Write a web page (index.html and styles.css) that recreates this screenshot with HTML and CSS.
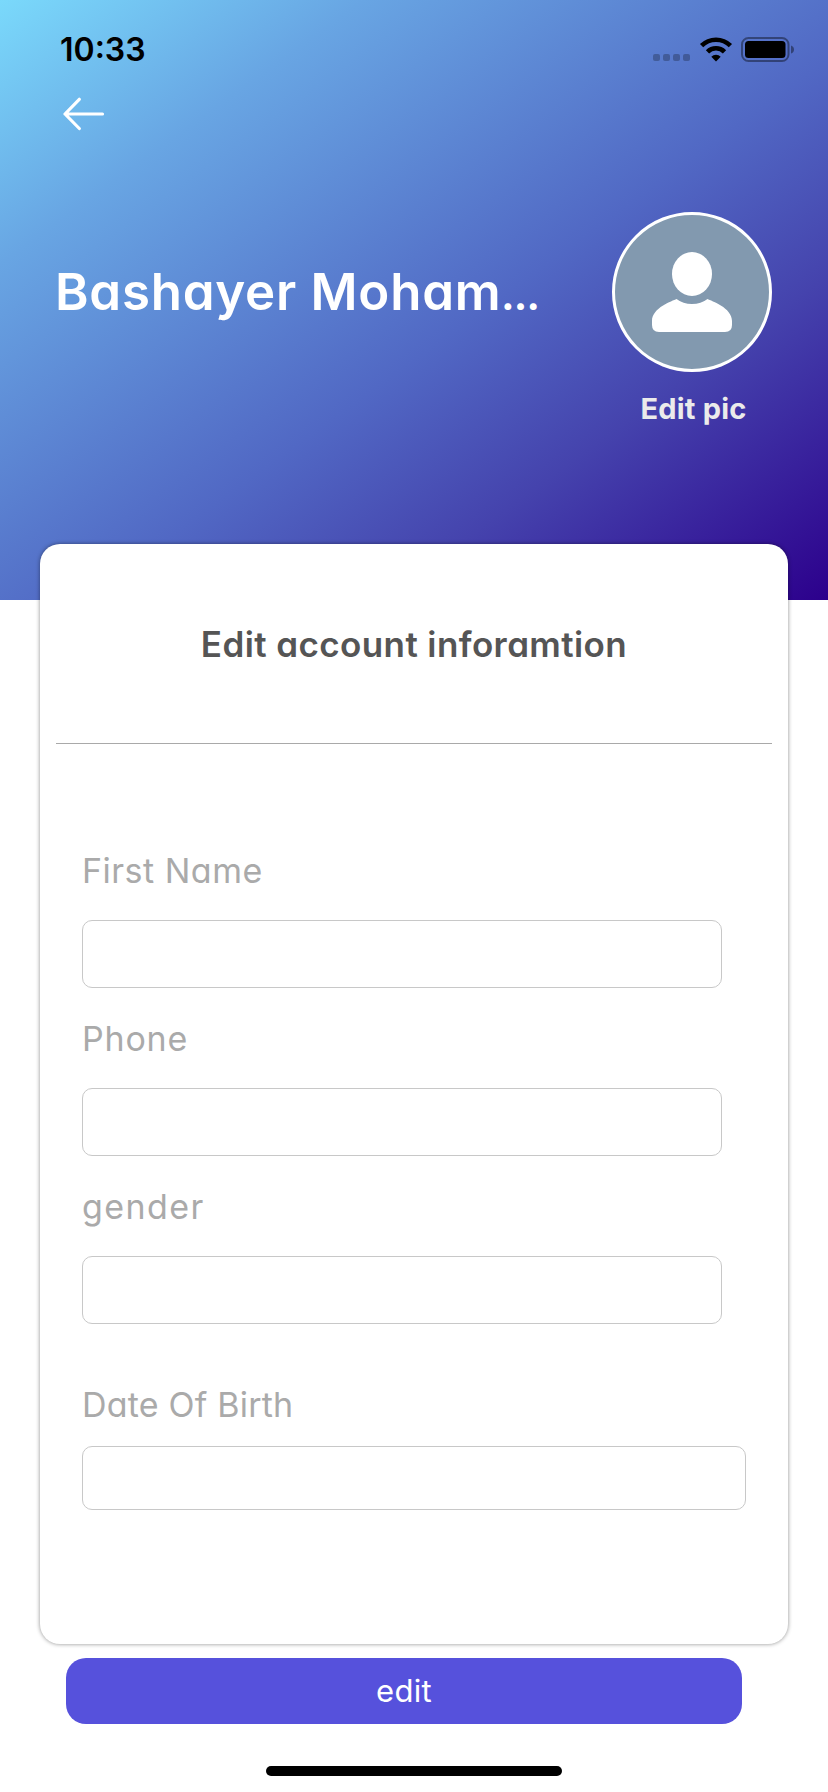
FILE: index.html
```html
<!DOCTYPE html>
<html lang="en">
<head>
<meta charset="utf-8">
<title>Edit account</title>
<link rel="stylesheet" href="styles.css">
</head>
<body>
<main class="screen">
  <header class="hero">
    <div class="status">
      <span class="clock">10:33</span>
      <div class="indicators">
        <svg class="signal" width="38" height="8" viewBox="0 0 38 8"><g fill="#000" fill-opacity=".25"><rect width="7" height="7" rx="2"/><rect x="10" width="7" height="7" rx="2"/><rect x="20" width="7" height="7" rx="2"/><rect x="30" width="7" height="7" rx="2"/></g></svg>
        <svg class="wifi" width="34" height="26" viewBox="0 0 34 26"><g fill="none" stroke="#000" stroke-width="4.6"><path d="M2.600 8.700a20.300 20.300 0 0 1 28.800 0"/><path d="M8.500 14.800a12 12 0 0 1 17 0"/></g><path d="M17 24.500l-4.700-4.800a6.800 6.800 0 0 1 9.400 0z"/></svg>
        <svg class="battery" width="54" height="26" viewBox="0 0 54 26"><rect x="1" y="1" width="46.500" height="23" rx="6.500" fill="none" stroke="#000" stroke-opacity=".4" stroke-width="2"/><rect x="4" y="4" width="40.500" height="17" rx="3.500"/><path d="M50 8.500q3 1 3 4t-3 4z" fill-opacity=".4"/></svg>
      </div>
    </div>
    <a class="back" href="#" aria-label="Back"><svg width="42" height="34" viewBox="0 0 42 34"><path d="M16.300 2.300L2 17l14.300 14.500M2 17h37.500" fill="none" stroke="#fff" stroke-width="3.200" stroke-linecap="round" stroke-linejoin="round"/></svg></a>
    <div class="profile">
      <h1 class="name">Bashayer Moham<span class="dots">…</span></h1>
      <div class="photo">
        <svg class="avatar" width="160" height="160" viewBox="0 0 160 160"><circle cx="80" cy="80" r="78.500" fill="#8299af" stroke="#fff" stroke-width="3"/><ellipse cx="80" cy="62" rx="20" ry="22" fill="#fff"/><path d="M64.500 87Q71 92 80 92t15.500-5c4 2 24.500 8.500 24.500 22v4q0 7-7 7H47q-7 0-7-7v-4c0-13.500 20.500-20 24.500-22z" fill="#fff"/></svg>
        <a class="edit-pic" href="#">Edit pic</a>
      </div>
    </div>
  </header>
  <section class="card">
    <h2 class="title">Edit account inforamtion</h2>
    <form class="form">
      <label class="field"><span class="label first">First Name</span><input class="input" type="text"></label>
      <label class="field"><span class="label phone">Phone</span><input class="input" type="text"></label>
      <label class="field"><span class="label gender">gender</span><input class="input" type="text"></label>
      <label class="field birth"><span class="label date">Date Of Birth</span><input class="input" type="text"></label>
    </form>
  </section>
  <button class="submit" type="button">edit</button>
  <div class="home"></div>
</main>
</body>
</html>
```

FILE: styles.css
```css
* { box-sizing: border-box; }
body { margin: 0; background: #fff; }
.screen {
  width: 828px;
  height: 1792px;
  overflow: hidden;
  display: flex;
  flex-direction: column;
  font-family: Inter, "Open Sans", sans-serif;
  font-feature-settings: "cv11";
}
.hero {
  height: 600px;
  flex: none;
  background: linear-gradient(to bottom right, #7ad9fb 0%, #68a5e3 22%, #5168c4 55%, #4543ad 73%, #2c008c 100%);
}
.status {
  height: 97px;
  padding: 31px 33px 0 60px;
  display: flex;
  justify-content: space-between;
}
.clock {
  font-size: 32px;
  line-height: 38px;
  font-weight: 600;
}
.indicators { display: flex; align-items: flex-start; padding-top: 6px; }
.signal { margin: 17px 8px 0 0; }
.wifi { margin-right: 8px; }
.back { display: block; width: 42px; height: 34px; margin-left: 63px; }
.back svg { display: block; }
.profile {
  display: flex;
  justify-content: space-between;
  padding: 81px 56px 0 55px;
}
.name {
  margin: 50px 0 0;
  font-size: 51px;
  line-height: 60px;
  font-weight: 600;
  letter-spacing: .75px;
  color: #fff;
  white-space: nowrap;
}
.dots { font-size: 34px; font-weight: 900; letter-spacing: 0; }
.photo { display: flex; flex-direction: column; align-items: center; width: 160px; }
.avatar { display: block; }
.edit-pic {
  margin: 19px 0 0 3px;
  font-size: 29px;
  line-height: 36px;
  font-weight: 700;
  letter-spacing: .2px;
  color: #ebebeb;
  text-decoration: none;
  font-feature-settings: normal;
  white-space: nowrap;
}
.card {
  position: relative;
  flex: none;
  width: 748px;
  height: 1100px;
  margin: -56px 40px 0;
  padding: 0 16px;
  background: #fff;
  border-radius: 20px;
  box-shadow: 0 0 4px rgba(0, 0, 0, .45);
}
.title {
  height: 200px;
  margin: 0;
  border-bottom: 1px solid #a9a9a9;
  font-size: 35px;
  line-height: 200px;
  font-weight: 600;
  letter-spacing: .4px;
  color: #555;
  text-align: center;
  white-space: nowrap;
}
.form { padding: 102px 26px 0; display: flex; flex-direction: column; }
.field { display: block; height: 168px; }
.label {
  display: block;
  height: 74px;
  font-size: 34px;
  line-height: 49px;
  color: #aaa;
  white-space: nowrap;
}
.first { letter-spacing: .5px; }
.phone { letter-spacing: .8px; }
.gender { letter-spacing: 1.4px; }
.date { letter-spacing: .2px; }
.input {
  display: block;
  width: 640px;
  height: 68px;
  border: 1px solid #c8c8c8;
  border-radius: 10px;
  background: #fff;
  padding: 0 16px;
  font: inherit;
}
.birth { padding-top: 30px; }
.birth .label { height: 66px; }
.birth .input { width: 664px; height: 64px; }
.submit {
  flex: none;
  width: 676px;
  height: 66px;
  margin: 14px 0 0 66px;
  border: 0;
  border-radius: 20px;
  background: #5651dc;
  color: #fff;
  font: 400 31px/66px Inter, sans-serif;
  letter-spacing: .3px;
  padding: 0;
}
.home {
  width: 296px;
  height: 10px;
  margin: 42px auto 0;
  border-radius: 5px;
  background: #000;
  flex: none;
}
```
